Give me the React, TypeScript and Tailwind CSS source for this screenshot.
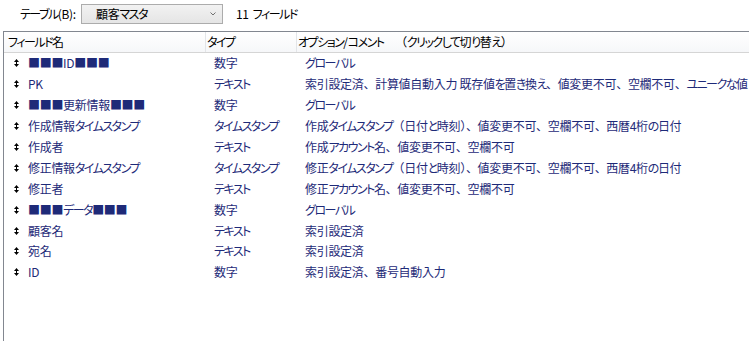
import React from 'react';

const rows: [string, string, string][] = [
  ['■■■ID■■■', '数字', 'グローバル'],
  ['PK', 'テキスト', '索引設定済、計算値自動入力 既存値を置き換え、値変更不可、空欄不可、ユニークな値'],
  ['■■■更新情報■■■', '数字', 'グローバル'],
  ['作成情報タイムスタンプ', 'タイムスタンプ', '作成タイムスタンプ（日付と時刻）、値変更不可、空欄不可、西暦4桁の日付'],
  ['作成者', 'テキスト', '作成アカウント名、値変更不可、空欄不可'],
  ['修正情報タイムスタンプ', 'タイムスタンプ', '修正タイムスタンプ（日付と時刻）、値変更不可、空欄不可、西暦4桁の日付'],
  ['修正者', 'テキスト', '修正アカウント名、値変更不可、空欄不可'],
  ['■■■データ■■■', '数字', 'グローバル'],
  ['顧客名', 'テキスト', '索引設定済'],
  ['宛名', 'テキスト', '索引設定済'],
  ['ID', '数字', '索引設定済、番号自動入力'],
];

// UI font has narrow kana and full-width punctuation; mimic that
function jp(text: string) {
  return text.split(/([、（）　]|[ぁ-んァ-ヶー]+)/).map((part, i) => {
    if (!part) return null;
    if (/^[、（）　]$/.test(part)) {
      return <span key={i} className="[font-feature-settings:normal]">{part}</span>;
    }
    if (/^[ぁ-んァ-ヶー]+$/.test(part)) {
      return <span key={i} className="tracking-[-1.5px]">{part}</span>;
    }
    return part;
  });
}

function MoveArrow() {
  return (
    <svg width="5" height="8" viewBox="0 0 5 8" className="shrink-0">
      <path d="M2.5 0 L5 3 L0 3 Z" fill="#000" />
      <rect x="2" y="3" width="1" height="2" fill="#000" />
      <path d="M0 5 L5 5 L2.5 8 Z" fill="#000" />
    </svg>
  );
}

export default function App() {
  return (
    <div
      className="w-[749px] h-[341px] overflow-hidden bg-white text-[12px] leading-none tracking-[-0.3px] text-black whitespace-nowrap [font-feature-settings:'palt']"
      style={{ fontFamily: '"Noto Sans CJK JP", "Noto Sans", sans-serif' }}
    >
      {/* toolbar */}
      <div className="h-[31px] flex items-start pt-[4px]">
        <span className="ml-[20px] w-[61px] shrink-0 h-[20px] flex items-center">{jp('テーブル(B):')}</span>
        <div className="w-[142px] shrink-0 h-[20px] border border-[#acacac] bg-gradient-to-b from-[#f2f2f2] to-[#e5e5e5] flex items-center pl-[14px] pr-[6px]">
          <span className="flex-1">{jp('顧客マスタ')}</span>
          <svg width="6" height="4" viewBox="0 0 6 4">
            <path d="M0.5 0.5 L3 3 L5.5 0.5" stroke="#707070" strokeWidth="1" fill="none" />
          </svg>
        </div>
        <span className="ml-[13px] h-[20px] flex items-center gap-[4px]">
          <span>11</span>
          <span>{jp('フィールド')}</span>
        </span>
      </div>

      {/* field list */}
      <div className="ml-[3px] h-[310px] border-l border-t border-[#828790]">
        <div className="flex h-[21px] border-b border-[#d5d5d5] bg-gradient-to-b from-white to-[#f6f7f9]">
          <div className="w-[202px] shrink-0 border-r border-[#e3e5e8] flex items-center pl-[4px]">{jp('フィールド名')}</div>
          <div className="w-[91px] shrink-0 border-r border-[#e3e5e8] flex items-center pl-[1px]">{jp('タイプ')}</div>
          <div className="flex-1 flex items-center pl-[1px]">{jp('オプション/コメント　（クリックして切り替え）')}</div>
        </div>
        <div className="text-[#1e2a78]">
          {rows.map(([name, type, opt], i) => (
            <div key={i} className="flex h-[20.9px] items-center">
              <div className="w-[202px] shrink-0 flex items-center pl-[10px]">
                <MoveArrow />
                <span className="ml-[9px]">{jp(name)}</span>
              </div>
              <div className="w-[91px] shrink-0 pl-[8px]">{jp(type)}</div>
              <div className="flex-1 pl-[8px]">{jp(opt)}</div>
            </div>
          ))}
        </div>
      </div>
    </div>
  );
}
